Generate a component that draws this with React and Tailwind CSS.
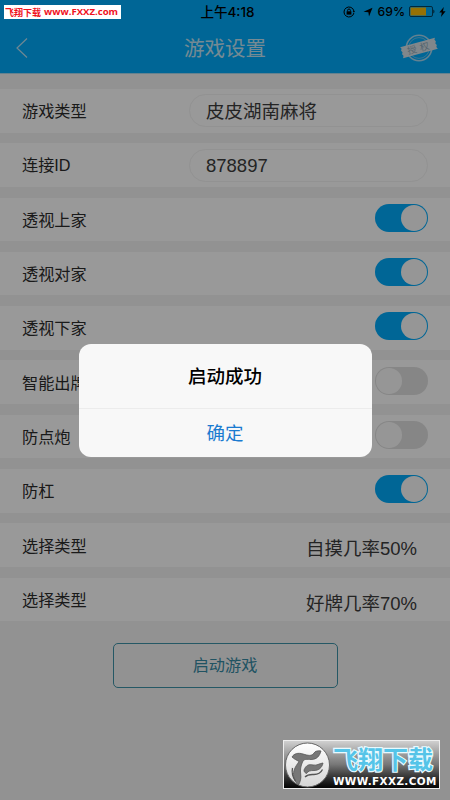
import React, { useState } from 'react';

const initialSwitches = [
  { label: '透视上家', on: true },
  { label: '透视对家', on: true },
  { label: '透视下家', on: true },
  { label: '智能出牌', on: false },
  { label: '防点炮', on: false },
  { label: '防杠', on: true }
];

const fields = [
  { label: '游戏类型', value: '皮皮湖南麻将' },
  { label: '连接ID', value: '878897' }
];

const odds = [
  { label: '选择类型', value: '自摸几率50%' },
  { label: '选择类型', value: '好牌几率70%' }
];

function StatusBar() {
  return (
    <div className="grid h-6 grid-cols-[1fr_auto_1fr] items-center font-['Inter','Noto_Sans_CJK_SC',sans-serif] font-medium text-black">
      <span />
      <span className="pl-[5px] text-[13.5px]">上午4:18</span>
      <div className="flex items-center justify-end pr-[4px]">
        <svg className="mr-[8px] h-[12px] w-[12px]" viewBox="0 0 12 12" fill="none">
          <path d="M10.9 7A5 5 0 1 1 10.9 5" stroke="black" strokeWidth="1" />
          <path d="M9.7 5h2.3l-1.1 1.8z" fill="black" />
          <path d="M3.6 5.3h4.8v3.3H3.6z" fill="black" />
          <path d="M4.6 5.5V4.4a1.4 1.4 0 0 1 2.8 0v1.1" stroke="black" strokeWidth="1" />
        </svg>
        <svg className="mr-[5px] h-[10px] w-[10px]" viewBox="0 0 10 10">
          <path d="M9.5.7 6 9.5 5.4 5.2.5 4.7z" fill="black" />
        </svg>
        <span className="mr-[4px] text-[12.2px]">69%</span>
        <svg className="mr-[4px] h-[11px] w-[26px]" viewBox="0 0 26 11" fill="none">
          <rect x=".5" y=".5" width="23" height="10" rx="1.5" stroke="black" strokeOpacity=".6" />
          <rect x="1.5" y="1.5" width="15.5" height="8" fill="#f7bd0b" />
          <path d="M24.5 3.5v4c1.1-.4 1.1-3.6 0-4z" fill="black" />
        </svg>
        <svg className="h-[10px] w-[7px]" viewBox="0 0 7 10">
          <path d="M4.8 0 .3 5.5h2.5L2 10l4.6-5.8H4z" fill="black" />
        </svg>
      </div>
    </div>
  );
}

function Stamp() {
  return (
    <svg className="h-[32px] w-[40px]" viewBox="0 0 40 32">
      <circle cx="20" cy="16" r="12.7" fill="none" stroke="#a5d8f2" strokeWidth="1.6" />
      <circle cx="20" cy="16" r="10.4" fill="none" stroke="#7cc8f0" strokeWidth=".8" />
      <g transform="rotate(-15 20 16)">
        <path d="M2 10.3h36l-1 1.8 1 1.8-1 1.9 1 1.9-1 1.8 1 2.2H2l1-2.2-1-1.8 1-1.9-1-1.9 1-1.8z" fill="#d8e2e8" />
        <text x="21" y="19.5" textAnchor="middle" fontSize="9.5" letterSpacing="3.5" fill="#8ea9ba">
          授权
        </text>
      </g>
    </svg>
  );
}

function Row({ label, children }) {
  return (
    <div className="flex h-[43.5px] items-center justify-between bg-white pl-[22px] pr-[22px]">
      <span className="pt-[1px] text-[16.2px] leading-none text-[#2c2c2c]">{label}</span>
      {children}
    </div>
  );
}

function Switch({ on, onClick }) {
  return (
    <button
      onClick={onClick}
      className={`-mt-[3px] flex h-[28px] w-[53px] items-center rounded-full p-px ${
        on ? 'justify-end bg-[#00aafa]' : 'justify-start bg-[#e0e0e0]'
      }`}
    >
      <span className="h-[26px] w-[26px] rounded-full bg-[#fbfbfb]" />
    </button>
  );
}

function Watermark() {
  return (
    <div className="absolute left-[283px] top-[740px] flex h-[49px] w-[157px] border border-[#eeeeee] bg-linear-to-b from-[#d0d0d0] via-[#777777] to-[#050505]">
      <svg className="mt-px h-[46px] w-[47px] shrink-0" viewBox="0 0 47 46">
        <defs>
          <linearGradient id="disc" x1="0" y1="0" x2="0" y2="1">
            <stop offset="0" stopColor="#fff" />
            <stop offset="1" stopColor="#d6d6d6" />
          </linearGradient>
        </defs>
        <circle cx="23.5" cy="23" r="22" fill="url(#disc)" stroke="#666" strokeWidth="1" />
        <path
          d="M8 15c2-3.5 6-4.5 11-3 5 1.5 9 2.5 11-1 1-2 4-2.5 7-2-1.5 5-4 8.5-10 8.500-4 0-7-1-8.500 2.500-1.700 4-2.500 8-1.800 12 .6 4-.2 7.500-2.200 11-4.500-4-6-9-4.500-14.500 1.200-4 3.500-6.500 5-9-2.500-1.500-5-2.500-7-4.500z"
          fill="#777"
          stroke="#555"
          strokeWidth=".8"
        />
        <path d="M20 28c2-5 5-6 9-5 4 .8 6-1.5 10-2-1 5-4.5 7.5-9 7.5-4 0-6 .5-7.5 3-1.5-.8-2.5-1.5-2.5-3.5z" fill="#777" stroke="#555" strokeWidth=".8" />
        <path d="M21 35c3-3 6-2.5 9-2.5 4 0 7-2 8.5-5M8.5 26c-1 5 0 9 3 13" stroke="#555" strokeWidth="1.3" fill="none" />
      </svg>
      <div className="flex flex-col pl-[2px] pt-[5px]">
        <span className="h-[28px] text-[25px] font-bold leading-[28px] text-[#55c4e8] [-webkit-text-stroke:2.4px_#e8faff] [paint-order:stroke_fill]">
          飞翔下载
        </span>
        <span className="mt-[1px] font-['DejaVu_Sans'] text-[10.4px] font-bold leading-[12px] tracking-[0.4px] text-white">
          WWW.FXXZ.COM
        </span>
      </div>
    </div>
  );
}

function App() {
  const [switches, setSwitches] = useState(initialSwitches);
  const [dialogOpen, setDialogOpen] = useState(true);

  const toggle = (index) => {
    setSwitches(switches.map((item, i) => (i === index ? { ...item, on: !item.on } : item)));
  };

  return (
    <div className="relative h-[800px] w-[450px] overflow-hidden bg-[#f3f3f3] font-['Liberation_Sans','Noto_Sans_CJK_SC',sans-serif]">
      {/* Header */}
      <header className="h-[74px] border-b border-[#a8d9ef] bg-[#00aafa]">
        <StatusBar />
        <div className="grid h-[48px] grid-cols-3 items-center">
          <svg className="ml-[15px] h-[22px] w-[14px]" viewBox="0 0 14 22" fill="none">
            <path d="M12 1.5 2 11l10 9.5" stroke="#b8e2f5" strokeWidth="1.2" />
          </svg>
          <h1 className="pt-[2px] text-center text-[20.5px] text-[#c3e6f6]">游戏设置</h1>
          <div className="flex justify-end pr-[11px]">
            <Stamp />
          </div>
        </div>
      </header>

      {/* Settings */}
      <div className="flex flex-col gap-[10.8px] pt-[15px]">
        {fields.map((field) => (
          <Row key={field.label} label={field.label}>
            <div className="flex h-[33px] w-[239px] items-center rounded-full border border-[#f3f3f3] pl-[16px] pt-[2px] text-[18.5px] text-[#3c3c3c]">
              {field.value}
            </div>
          </Row>
        ))}
        {switches.map((item, i) => (
          <Row key={item.label} label={item.label}>
            <Switch on={item.on} onClick={() => toggle(i)} />
          </Row>
        ))}
        {odds.map((item) => (
          <Row key={item.value} label={item.label}>
            <span className="mr-[11px] pt-[8px] text-[18.5px] text-[#3c3c3c]">{item.value}</span>
          </Row>
        ))}
      </div>

      <button className="mx-auto mt-[22px] flex h-[45px] w-[225px] items-center justify-center rounded-[5px] border border-[#3f93a8] pb-px text-[16.2px] text-[#368aa3]">
        启动游戏
      </button>

      {/* Dialog */}
      {dialogOpen && (
        <div className="absolute inset-0 flex items-center justify-center bg-black/40">
          <div className="flex h-[113px] w-[293px] flex-col overflow-hidden rounded-[12px] bg-[#f8f8f8]">
            <p className="flex h-[65px] items-center justify-center border-b border-[#ececec] pt-[2px] text-[18.5px] font-medium text-black">
              启动成功
            </p>
            <button
              onClick={() => setDialogOpen(false)}
              className="flex-1 pt-[2px] text-[18.5px] text-[#1b7bd0]"
            >
              确定
            </button>
          </div>
        </div>
      )}

      <div className="absolute left-[4px] top-[5px] flex h-[14px] w-[117px] items-center gap-[3px] whitespace-nowrap bg-white pl-[1px] pt-px font-['Open_Sans','Noto_Sans_CJK_SC',sans-serif] text-[9px] font-bold text-[#f0101c]">
        <span>飞翔下载</span>
        <span className="text-[9.6px]">www.FXXZ.com</span>
      </div>
      <Watermark />
    </div>
  );
}

export default App;
